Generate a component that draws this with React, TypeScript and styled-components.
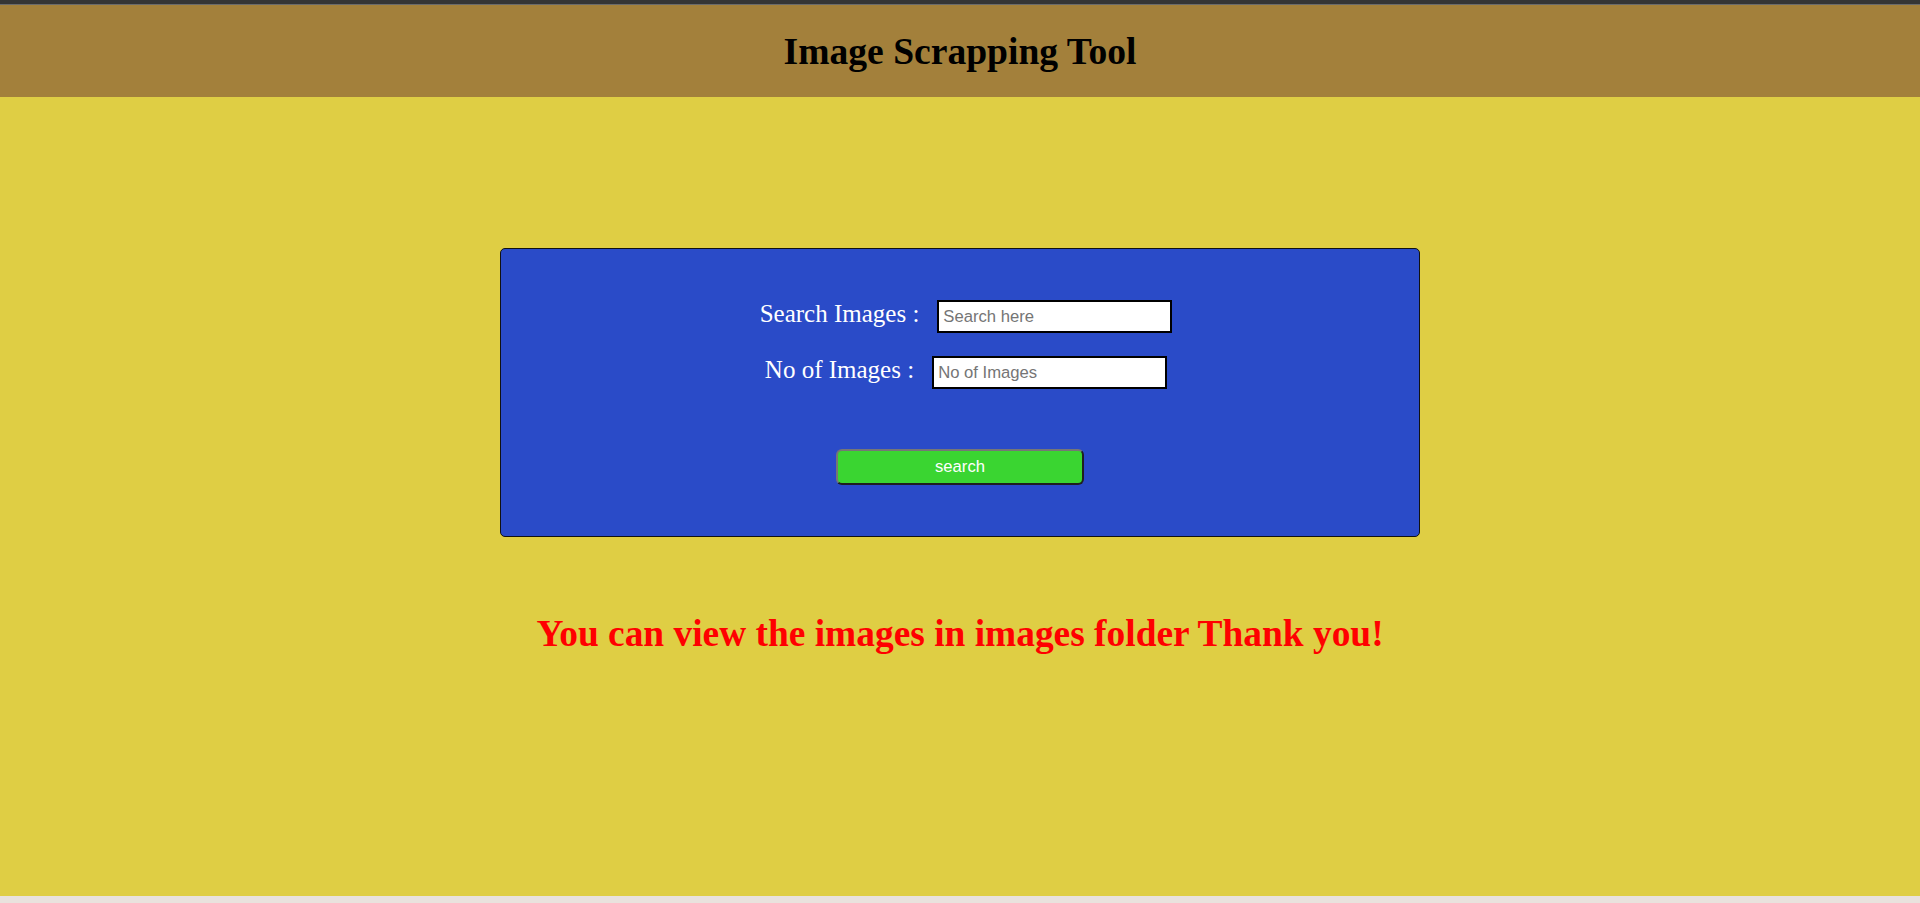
import React from "react";
import styled, { createGlobalStyle } from "styled-components";

const GlobalStyle = createGlobalStyle`
  html, body {
    margin: 0;
    padding: 0;
    background: #dfce44;
  }
  #root {
    min-height: 903px;
  }
`;

const Page = styled.div`
  display: flex;
  flex-direction: column;
  min-height: 903px;
  font-family: "Liberation Serif", "Times New Roman", serif;
`;

const TopStrip = styled.div`
  height: 4px;
  background: #353535;
  border-bottom: 1px solid #6b6b6b;
`;

const Header = styled.header`
  height: 92px;
  background: #a3803b;
  display: flex;
  align-items: center;
  justify-content: center;
`;

const Title = styled.h1`
  margin: 0;
  font-size: 37.6px;
  font-weight: bold;
  color: #000;
`;

const Main = styled.main`
  flex: 1;
  background: #dfce44;
  display: flex;
  flex-direction: column;
  align-items: center;
`;

const FormCard = styled.form`
  margin-top: 151px;
  width: 920px;
  box-sizing: border-box;
  background: #2a4bc8;
  border: 1px solid #111;
  border-radius: 5px;
  padding: 51px 0 51px;
  display: flex;
  flex-direction: column;
  align-items: center;
`;

const Row = styled.div<{ $mt?: number }>`
  display: flex;
  align-items: baseline;
  gap: 18px;
  margin-left: 12px;
  margin-top: ${(p) => p.$mt ?? 0}px;
`;

const Label = styled.label`
  color: #fff;
  font-size: 25px;
  line-height: 25px;
`;

const Input = styled.input`
  width: 235px;
  height: 33px;
  box-sizing: border-box;
  border: 2px solid #000;
  background: #fff;
  padding: 0 4px;
  font-family: "Liberation Sans", Arial, sans-serif;
  font-size: 16.67px;
  outline: none;
  &::placeholder {
    color: #757575;
  }
`;

const SearchButton = styled.button`
  margin-top: 60px;
  width: 248px;
  height: 36px;
  box-sizing: border-box;
  background: #3ad531;
  color: #fff;
  font-family: "Liberation Sans", Arial, sans-serif;
  font-size: 16.67px;
  border-width: 2px;
  border-style: solid;
  border-color: #767676 #1f1f1f #1f1f1f #767676;
  border-radius: 6px;
  cursor: pointer;
`;

const Message = styled.h1`
  margin: 75px 0 0;
  font-size: 37.4px;
  font-weight: bold;
  color: #ff0000;
  text-align: center;
`;

const BottomStrip = styled.div`
  height: 7px;
  background: #e9e2dd;
`;

export default function App() {
  return (
    <>
      <GlobalStyle />
      <Page>
        <TopStrip />
        <Header>
          <Title>Image Scrapping Tool</Title>
        </Header>
        <Main>
          <FormCard onSubmit={(e) => e.preventDefault()}>
            <Row>
              <Label htmlFor="search">Search Images :</Label>
              <Input id="search" type="text" placeholder="Search here" />
            </Row>
            <Row $mt={23}>
              <Label htmlFor="count">No of Images :</Label>
              <Input id="count" type="text" placeholder="No of Images" />
            </Row>
            <SearchButton type="submit">search</SearchButton>
          </FormCard>
          <Message>You can view the images in images folder Thank you!</Message>
        </Main>
        <BottomStrip />
      </Page>
    </>
  );
}
